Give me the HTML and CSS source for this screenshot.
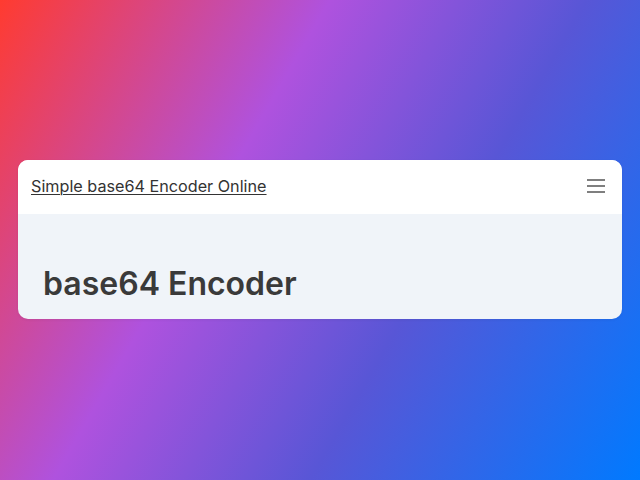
FILE: index.html
```html
<!DOCTYPE html>
<html lang="en">
<head>
<meta charset="utf-8">
<title>Simple base64 Encoder Online</title>
<link rel="stylesheet" href="styles.css">
</head>
<body>
<main class="card">
  <header class="topbar">
    <a class="brand" href="#">Simple base64 Encoder Online</a>
    <button class="menu" aria-label="Menu">
      <svg width="18" height="14" viewBox="0 0 18 14" aria-hidden="true">
        <path d="M0 1h18M0 7h18M0 13h18" stroke="#555" stroke-width="1.5" fill="none"/>
      </svg>
    </button>
  </header>
  <section class="content">
    <h1 class="title">base64 Encoder</h1>
  </section>
</main>
</body>
</html>
```
FILE: styles.css
```css
html, body {
  margin: 0;
  height: 100%;
}
body {
  font-family: Inter, "Noto Sans", sans-serif;
  background: linear-gradient(120deg, #ff3b30 0%, #af52de 36%, #5856d6 64%, #007aff 100%);
  display: flex;
  align-items: center;
  padding: 0 18px 2px;
  box-sizing: border-box;
}
.card {
  flex: 1;
  background: #f0f4f9;
  border-radius: 10px;
  overflow: hidden;
  box-shadow: 0 1px 3px rgba(0,0,0,0.06);
}
.topbar {
  height: 54px;
  background: #fff;
  display: flex;
  align-items: center;
  justify-content: space-between;
  padding: 0 17px 2px 13px;
  box-sizing: border-box;
}
.brand {
  color: #333;
  font-size: 16.2px;
  text-decoration: underline;
  text-underline-offset: 2px;
  text-decoration-thickness: 1px;
}
.menu {
  background: none;
  border: 0;
  padding: 0;
  display: flex;
}
.content {
  height: 105px;
  padding: 0 25px;
  display: flex;
  align-items: flex-end;
}
.title {
  margin: 0 0 15px;
  font-size: 32px;
  font-weight: 600;
  color: #3a3a3a;
  line-height: 1.2;
}
```
